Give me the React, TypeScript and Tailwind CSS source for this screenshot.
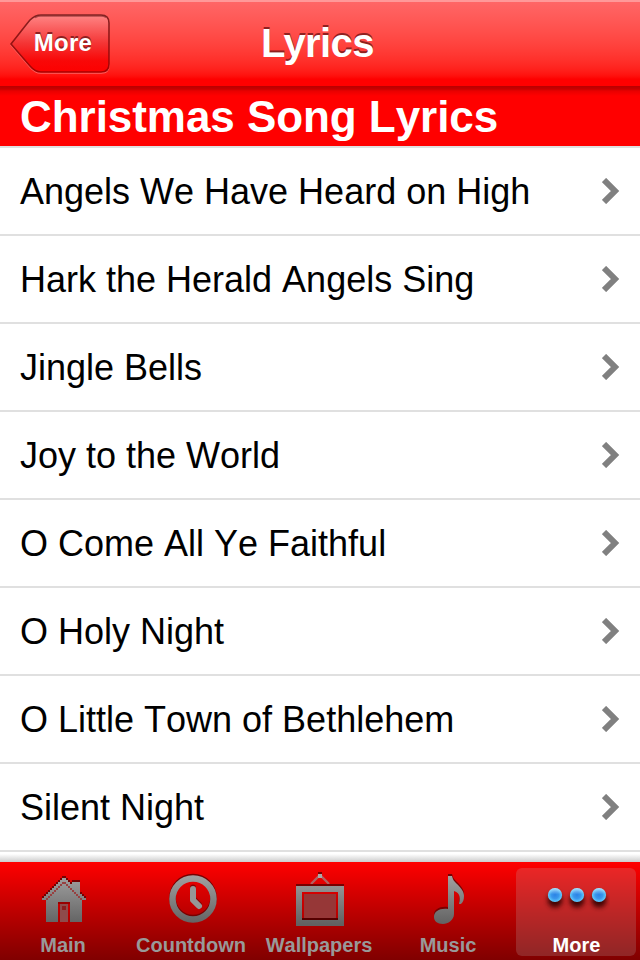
import type { ReactNode } from 'react';

const songs = [
  'Angels We Have Heard on High',
  'Hark the Herald Angels Sing',
  'Jingle Bells',
  'Joy to the World',
  'O Come All Ye Faithful',
  'O Holy Night',
  'O Little Town of Bethlehem',
  'Silent Night',
];

function Chevron() {
  return (
    <svg width="18" height="26" viewBox="0 0 18 26" className="shrink-0">
      <path d="M2 2 13 13 2 24" fill="none" stroke="#808080" strokeWidth="6" />
    </svg>
  );
}

// All tab icons share one 56x56 canvas and the same grey gradient
function IconBox({ id, children }: { id: string; children: ReactNode }) {
  return (
    <svg width="56" height="56" viewBox="0 0 56 56">
      <defs>
        <linearGradient id={id} gradientUnits="userSpaceOnUse" x1="0" y1="4" x2="0" y2="54">
          <stop offset="0" stopColor="#a3a3a3" />
          <stop offset="1" stopColor="#626262" />
        </linearGradient>
      </defs>
      {children}
    </svg>
  );
}

function HomeIcon() {
  const house =
    'M6 30v-2h2v-2h2v-2h2v-2h2v-2h2v-2h2v-2h2v-2h2v-2h2v-2h2V8h4v2h2v2h2v2h2v-2h8v12h2v2h2v2h2v2h-4v22H34V32H22v20H10V30z';
  return (
    <IconBox id="home">
      <g shapeRendering="crispEdges">
        <path d={house} fill="#780000" transform="translate(0 -2)" />
        <path d={house} fill="url(#home)" />
        <path d="M26 12h4v2h-4z" fill="#974141" />
        {[1, 2, 3, 4, 5, 6, 7, 8].map((n) => (
          <g key={n} fill="#974141">
            <rect x={26 - 2 * n} y={12 + 2 * n} width="2" height="2" />
            <rect x={28 + 2 * n} y={12 + 2 * n} width="2" height="2" />
          </g>
        ))}
        <path d="M22 32h12v2H22z" fill="#990000" />
        <path d="M24 34h8v18h-8z" fill="#8f4b4b" />
        <path d="M26 36h4v4h-4z" fill="#8b1d1d" />
      </g>
    </IconBox>
  );
}

function ClockIcon() {
  return (
    <IconBox id="clock">
      <circle cx="29" cy="27.5" r="20.5" fill="none" stroke="#780000" strokeWidth="6.5" />
      <circle cx="29" cy="29" r="20.5" fill="none" stroke="url(#clock)" strokeWidth="6.5" />
      <g fill="none" strokeWidth="6" strokeLinecap="round" strokeLinejoin="round">
        <path d="M29 17.5v11l6 6" stroke="#8a0000" />
        <path d="M29 19v11l6 6" stroke="#969696" />
      </g>
    </IconBox>
  );
}

function PictureIcon() {
  return (
    <IconBox id="picture">
      <path d="M19 14 28 5l9 9" fill="none" stroke="#b46060" strokeWidth="2.4" />
      <g shapeRendering="crispEdges">
        <path d="M26 2h4v2h-4z" fill="#780000" />
        <path d="M26 4h4v4h-4z" fill="#aaa" />
        <path d="M4 14h48v2H4z" fill="#780000" />
        <path fillRule="evenodd" d="M4 16h48v40H4zM10 22v28h36V22z" fill="url(#picture)" />
        <path d="M12 24h32v24H12z" fill="#963737" />
        <path d="M10 48h36v2H10z" fill="#550000" />
      </g>
    </IconBox>
  );
}

function MusicIcon() {
  const note =
    'M28 6h4c1 4 2 5 5 8 5 5 7 8 7 12 0 4-1 6-3 8h-2c1-5 2-11-5-13v23c0 6-6 10-11 10-6 0-9-3-9-7 0-6 6-9 14-8z';
  return (
    <IconBox id="music">
      <path d={note} fill="#780000" transform="translate(0 -2)" />
      <path d={note} fill="url(#music)" />
    </IconBox>
  );
}

function DotsIcon() {
  return (
    <svg width="68" height="56" viewBox="0 0 68 56">
      <defs>
        <radialGradient id="dot" cx="0.5" cy="0.5" r="0.52">
          <stop offset="0" stopColor="#2c83e5" />
          <stop offset="0.5" stopColor="#3997ec" />
          <stop offset="1" stopColor="#65d2ff" />
        </radialGradient>
        <linearGradient id="gloss" x1="0" y1="0" x2="0" y2="1">
          <stop offset="0" stopColor="#fff" stopOpacity="0.5" />
          <stop offset="0.45" stopColor="#fff" stopOpacity="0" />
        </linearGradient>
        <filter id="shade" x="-50%" y="-50%" width="200%" height="220%">
          <feGaussianBlur stdDeviation="2.5" />
        </filter>
      </defs>
      {[13, 35, 57].map((x) => (
        <g key={x}>
          <circle cx={x} cy="30" r="7.5" fill="#300000" fillOpacity="0.9" filter="url(#shade)" />
          <circle cx={x} cy="25" r="7.1" fill="url(#dot)" />
          <circle cx={x} cy="25" r="7.1" fill="url(#gloss)" />
        </g>
      ))}
    </svg>
  );
}

const tabs = [
  { label: 'Main', icon: <HomeIcon />, text: 'pr-0.5 text-[#999999]' },
  { label: 'Countdown', icon: <ClockIcon />, text: 'pr-0.5 text-[#999999]' },
  { label: 'Wallpapers', icon: <PictureIcon />, text: 'pr-0.5 text-[#999999]' },
  { label: 'Music', icon: <MusicIcon />, text: 'text-[#999999]' },
  { label: 'More', icon: <DotsIcon />, text: 'pl-px text-white', active: true },
];

function BackButton() {
  return (
    <button className="relative ml-2 mt-2.5 h-[62px] w-[104px]">
      <svg width="104" height="62" viewBox="0 0 104 62" className="absolute inset-0">
        <defs>
          <linearGradient id="back" x1="0" y1="0" x2="0" y2="1">
            <stop offset="0" stopColor="#ff8585" />
            <stop offset="0.5" stopColor="#f43434" />
            <stop offset="0.8" stopColor="#f90808" />
            <stop offset="1" stopColor="#fd0000" />
          </linearGradient>
          <linearGradient id="edge" x1="0" y1="0" x2="0" y2="1">
            <stop offset="0" stopColor="#852222" />
            <stop offset="1" stopColor="#a80000" />
          </linearGradient>
        </defs>
        <path d="M3 33C11 23 17 15 22 9q5-5 11-5h60q8 0 8 8v41q0 8-8 8H33q-6 0-11-6Q15 47 3 33z" fill="none" stroke="#ff6262" strokeWidth="1.5" />
        <path d="M3 32C11 22 17 14 22 8q5-5 11-5h60q8 0 8 8v41q0 8-8 8H33q-6 0-11-6Q15 46 3 32z" fill="url(#back)" stroke="url(#edge)" strokeWidth="1.6" />
        <path d="M27 5.5q3-1.5 6-1.5h60q3 0 5 1.5" fill="none" stroke="#792525" strokeOpacity="0.6" strokeWidth="1.5" />
      </svg>
      <span className="relative top-px left-[3px] text-2xl leading-none font-bold tracking-[0.3px] text-white [text-shadow:0_-2px_0_#8f2020]">
        More
      </span>
    </button>
  );
}

export default function App() {
  return (
    <div className="flex h-[960px] w-[640px] flex-col overflow-hidden bg-white font-['Liberation_Sans',Arial,sans-serif] [font-kerning:none]">
      <header className="grid h-[86px] shrink-0 grid-cols-[1fr_auto_1fr] border-t-2 border-[#ff9999] bg-linear-to-b from-[#ff6666] to-[#ff0000] to-92%">
        <div>
          <BackButton />
        </div>
        <h1 className="mt-[18px] -ml-[5px] text-[40px] leading-[46px] font-bold tracking-[-0.6px] text-white [font-kerning:normal] [text-shadow:0_-2px_0_#8f2020]">
          Lyrics
        </h1>
      </header>

      <h2 className="h-[60px] shrink-0 bg-[linear-gradient(to_bottom,#b90000_0,#c80000_3px,#e90000_5px,#ff0000_10px)] pt-1.5 pl-5 text-[44px] leading-[50px] font-bold tracking-[-0.05px] text-white">
        Christmas Song Lyrics
      </h2>

      <ul className="h-[706px] shrink-0 border-t-2 border-[#e0e0e0]">
        {songs.map((song) => (
          <li key={song} className="flex h-[88px] items-center justify-between border-b-2 border-[#e0e0e0] px-5">
            <span className="pt-0.5 text-4xl leading-10 whitespace-nowrap text-black">{song}</span>
            <Chevron />
          </li>
        ))}
      </ul>

      <div className="h-2.5 shrink-0 bg-linear-to-b from-white from-20% to-[#cccccc]" />

      <nav className="grid h-[98px] shrink-0 grid-cols-5 bg-linear-to-b from-[#ff0000] to-[#800000]">
        {tabs.map((tab) => (
          <div
            key={tab.label}
            className={`mt-1.5 flex h-[88px] flex-col items-center pt-0.5 ${tab.active ? 'mx-1 rounded-md bg-[#bfbfbf]/20' : ''}`}
          >
            <div className="h-[63px] shrink-0">{tab.icon}</div>
            <span className={`text-xl leading-6 font-bold ${tab.text}`}>{tab.label}</span>
          </div>
        ))}
      </nav>
    </div>
  );
}
